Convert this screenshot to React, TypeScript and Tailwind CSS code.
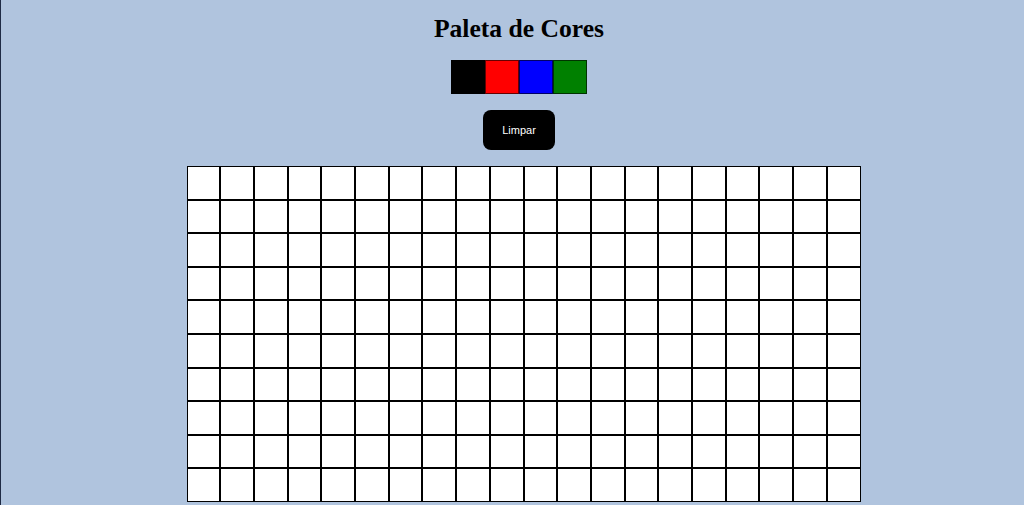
const colors = ["#000000", "#ff0000", "#0000ff", "#008000"];

export default function App() {
  const cells = Array.from({ length: 200 }, (_, i) => i);

  return (
    <div className="min-h-screen border-l border-[#1e2a44] bg-[#b0c4de] font-['Liberation_Sans',sans-serif]">
      <div className="flex flex-col items-center pt-[13px] pl-[13px]">
        <h1 className="font-['Liberation_Serif',serif] text-[25.6px] leading-[32px] font-bold text-black">
          Paleta de Cores
        </h1>

        <div className="mt-[15px] flex">
          {colors.map((c) => (
            <div
              key={c}
              className="h-[34px] w-[34px] border border-black/60"
              style={{ backgroundColor: c }}
            />
          ))}
        </div>

        <button className="mt-[16px] h-[40px] w-[72px] rounded-[8px] bg-black text-[11px] text-white">
          Limpar
        </button>

        <div className="mt-[16px] ml-[9px] grid w-[674px] grid-cols-20">
          {cells.map((i) => (
            <div key={i} className="h-[33.6px] border border-black bg-white" />
          ))}
        </div>
      </div>
    </div>
  );
}
